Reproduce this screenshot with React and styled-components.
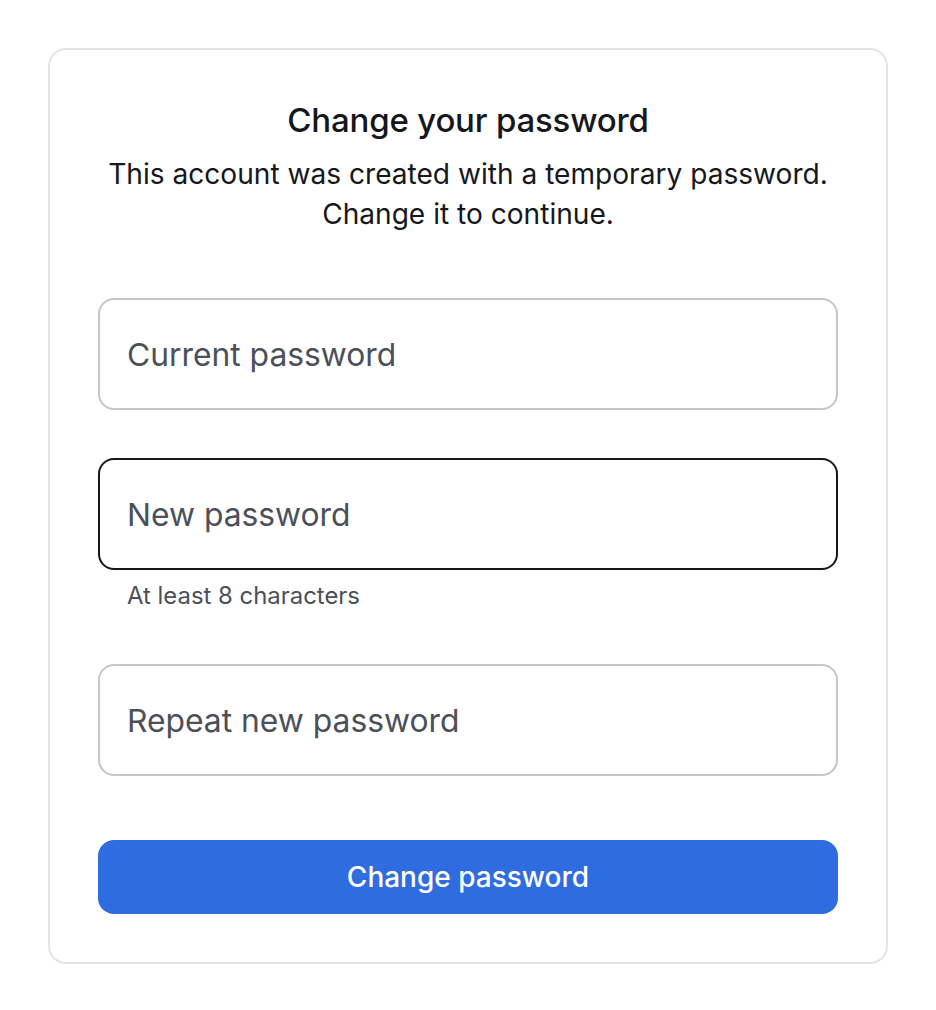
import React from "react";
import styled, { createGlobalStyle } from "styled-components";

const Global = createGlobalStyle`
  html, body { margin: 0; padding: 0; background: #ffffff; }
  body { font-family: Inter, "Noto Sans", sans-serif; color: #111318; }
  * { box-sizing: border-box; }
`;

const Page = styled.div`
  padding: 48px 48px 0 48px;
`;

const Card = styled.form`
  width: 840px;
  border: 2px solid #e4e4e7;
  border-radius: 18px;
  padding: 48px 48px 48px 48px;
  display: flex;
  flex-direction: column;
  background: #fff;
`;

const Title = styled.h1`
  margin: 0;
  font-family: Inter, sans-serif;
  font-weight: 500;
  font-size: 33px;
  line-height: 44px;
  letter-spacing: -0.2px;
  text-align: center;
  color: #15171c;
`;

const Subtitle = styled.p`
  margin: 12px 0 0 0;
  font-size: 28.1px;
  line-height: 40px;
  text-align: center;
  color: #15171c;
`;

const Fields = styled.div`
  margin-top: 64px;
  display: flex;
  flex-direction: column;
  gap: 48px;
`;

const Field = styled.div`
  display: flex;
  flex-direction: column;
`;

const Input = styled.input`
  width: 100%;
  height: 112px;
  border-radius: 16px;
  border: 2px solid ${(p) => (p.$focused ? "#15171c" : "#c6c6c9")};
  padding: 0 27px;
  font-family: Inter, sans-serif;
  font-size: 31.8px;
  color: #15171c;
  background: #fff;
  outline: none;
  &::placeholder { color: #4b5059; }
`;

const Hint = styled.div`
  margin-top: 11px;
  padding-left: 29px;
  font-size: 23.9px;
  line-height: 30px;
  color: #4b5059;
  margin-bottom: 5px;
`;

const Button = styled.button`
  margin-top: 64px;
  height: 74px;
  border: none;
  border-radius: 16px;
  background: #2e6ce0;
  color: #fff;
  font-family: Inter, sans-serif;
  font-size: 28px;
  font-weight: 500;
  cursor: pointer;
`;

export default function App() {
  return (
    <>
      <Global />
      <Page>
        <Card onSubmit={(e) => e.preventDefault()}>
          <Title>Change your password</Title>
          <Subtitle>
            This account was created with a temporary password.
            <br />
            Change it to continue.
          </Subtitle>
          <Fields>
            <Field>
              <Input type="password" placeholder="Current password" />
            </Field>
            <Field>
              <Input type="password" placeholder="New password" $focused />
              <Hint>At least 8 characters</Hint>
            </Field>
            <Field>
              <Input type="password" placeholder="Repeat new password" />
            </Field>
          </Fields>
          <Button type="submit">Change password</Button>
        </Card>
      </Page>
    </>
  );
}
